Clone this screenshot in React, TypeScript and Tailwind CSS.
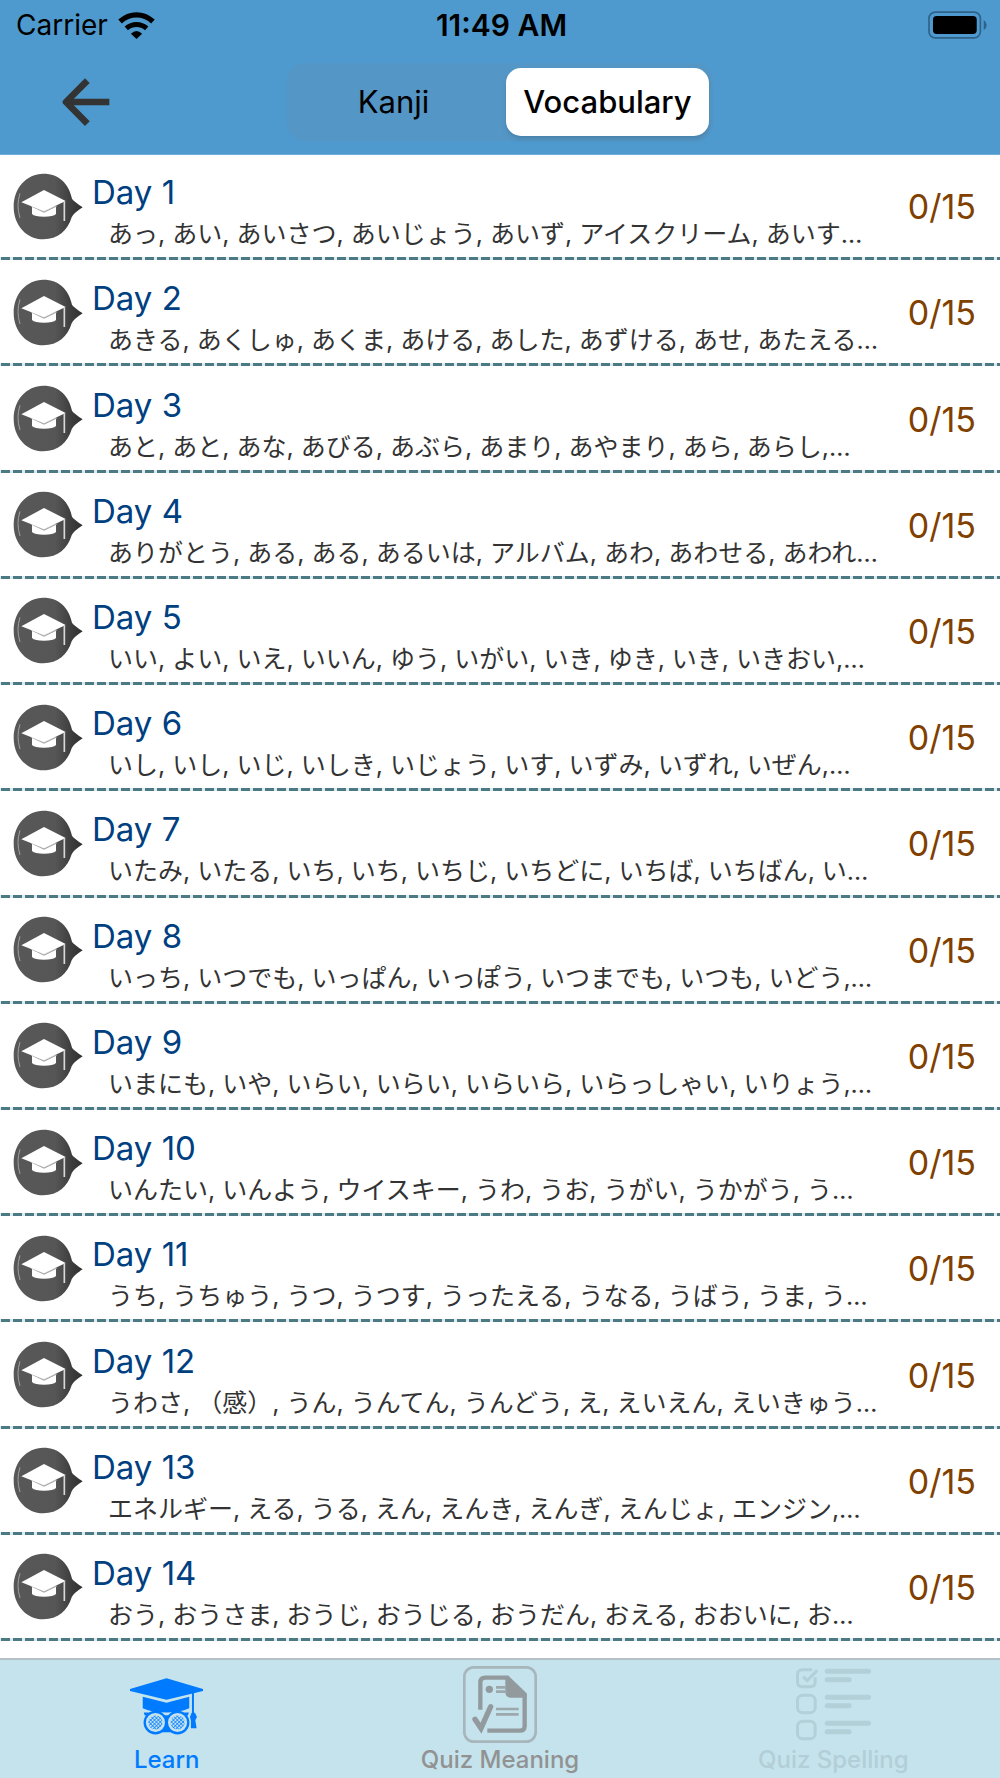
import React, { useState } from "react";

interface Lesson {
  title: string;
  words: string;
  done: number;
  total: number;
}

const lessons: Lesson[] = [
  { title: "Day 1", words: "あっ, あい, あいさつ, あいじょう, あいず, アイスクリーム, あいす…", done: 0, total: 15 },
  { title: "Day 2", words: "あきる, あくしゅ, あくま, あける, あした, あずける, あせ, あたえる…", done: 0, total: 15 },
  { title: "Day 3", words: "あと, あと, あな, あびる, あぶら, あまり, あやまり, あら, あらし,…", done: 0, total: 15 },
  { title: "Day 4", words: "ありがとう, ある, ある, あるいは, アルバム, あわ, あわせる, あわれ…", done: 0, total: 15 },
  { title: "Day 5", words: "いい, よい, いえ, いいん, ゆう, いがい, いき, ゆき, いき, いきおい,…", done: 0, total: 15 },
  { title: "Day 6", words: "いし, いし, いじ, いしき, いじょう, いす, いずみ, いずれ, いぜん,…", done: 0, total: 15 },
  { title: "Day 7", words: "いたみ, いたる, いち, いち, いちじ, いちどに, いちば, いちばん, い…", done: 0, total: 15 },
  { title: "Day 8", words: "いっち, いつでも, いっぱん, いっぽう, いつまでも, いつも, いどう,…", done: 0, total: 15 },
  { title: "Day 9", words: "いまにも, いや, いらい, いらい, いらいら, いらっしゃい, いりょう,…", done: 0, total: 15 },
  { title: "Day 10", words: "いんたい, いんよう, ウイスキー, うわ, うお, うがい, うかがう, う…", done: 0, total: 15 },
  { title: "Day 11", words: "うち, うちゅう, うつ, うつす, うったえる, うなる, うばう, うま, う…", done: 0, total: 15 },
  { title: "Day 12", words: "うわさ, （感）, うん, うんてん, うんどう, え, えいえん, えいきゅう…", done: 0, total: 15 },
  { title: "Day 13", words: "エネルギー, える, うる, えん, えんき, えんぎ, えんじょ, エンジン,…", done: 0, total: 15 },
  { title: "Day 14", words: "おう, おうさま, おうじ, おうじる, おうだん, おえる, おおいに, お…", done: 0, total: 15 },
];

const WifiIcon = () => (
  <svg className="h-[27px] w-[37px]" viewBox="360 30 112 82" fill="none" aria-hidden="true">
    <path d="M366 59C396 32 436 32 466 59" stroke="black" strokeWidth="16" />
    <path d="M385 80C403 64 429 64 447 80" stroke="black" strokeWidth="15" />
    <path d="M399 96Q416 80 433 96L416 112Z" fill="black" />
  </svg>
);

const BatteryIcon = () => (
  <svg className="h-7 w-[59px]" viewBox="1284 30 178 84" aria-hidden="true">
    <rect x="1287" y="33" width="155" height="78" rx="19" fill="none" stroke="#2f6289" strokeWidth="5" />
    <rect x="1299" y="45" width="132" height="54" rx="11" fill="black" />
    <path d="M1452 57Q1461 63 1461 72Q1461 82 1452 88Z" fill="#2f6289" />
  </svg>
);

const BackIcon = () => (
  <svg className="h-12 w-12" viewBox="186 232 144 144" fill="none" stroke="#333333" strokeWidth="20" aria-hidden="true">
    <path d="M328 304H200" />
    <path d="M262 240L198 304L262 369" strokeLinejoin="round" />
  </svg>
);

const LessonIcon = () => (
  <svg className="h-[67px] w-[70px] shrink-0" viewBox="39 67 210 201" aria-hidden="true">
    <defs>
      <linearGradient id="bubble" x1="0" x2="1" y1="0" y2="0">
        <stop offset="0" stopColor="#585858" />
        <stop offset="0.6" stopColor="#565656" />
        <stop offset="0.85" stopColor="#3c3c3c" />
        <stop offset="1" stopColor="#303030" />
      </linearGradient>
    </defs>
    <path
      d="M130 69C178 69 207 100 216 144Q220 151 248 170Q220 188 215 200C203 240 174 266 130 266C80 266 41 224 41 168C41 112 80 69 130 69Z"
      fill="url(#bubble)"
    />
    <path d="M60 128Q48 164 60 202" fill="none" stroke="#a0a0a0" strokeWidth="3" />
    <path d="M96 165L132 181L168 165V190Q160 198 132 198Q104 198 96 190Z" fill="white" />
    <path d="M94 166L132 184L170 166" fill="none" stroke="#a8a8a8" strokeWidth="4" />
    <path d="M64 155L132 118L197 151L132 182Z" fill="white" />
    <path d="M193 152V211" stroke="#d8d8d8" strokeWidth="5" />
  </svg>
);

const LearnIcon = () => (
  <svg className="h-[57px] w-[73px]" viewBox="119 80 218 170" aria-hidden="true">
    <defs>
      <pattern id="lens" width="8" height="8" patternUnits="userSpaceOnUse" patternTransform="rotate(45)">
        <path d="M0 0H8M0 0V8" stroke="#007aff" strokeWidth="4" />
      </pattern>
    </defs>
    <path d="M119 113L228 81L337 113V119L228 145L119 119Z" fill="#007aff" />
    <path d="M157 136L228 154L296 136V170Q265 183 228 183Q188 183 157 170Z" fill="#007aff" />
    <path d="M160 183Q195 181 214 195H242Q260 181 295 183L292 192H163Z" fill="#007aff" />
    <path d="M214 192H242V242H214Z" fill="#007aff" />
    <g fill="#c4e3ed" stroke="#007aff" strokeWidth="7">
      <circle cx="195" cy="213" r="32" />
      <circle cx="261" cy="213" r="32" />
    </g>
    <circle cx="195" cy="213" r="21" fill="url(#lens)" />
    <circle cx="261" cy="213" r="21" fill="url(#lens)" />
    <path d="M307 118V190" stroke="#007aff" strokeWidth="6" />
    <path d="M303 184H313L319 196L314 206L318 230H301V207L298 196Z" fill="#007aff" />
  </svg>
);

const MeaningIcon = () => (
  <svg className="h-[77px] w-[74px]" viewBox="189 51 222 231" fill="none" stroke="#929a9e" aria-hidden="true">
    <rect x="193" y="55" width="214" height="223" rx="28" stroke="#a8b6bc" strokeWidth="8" />
    <path d="M241 182V101Q241 86 256 86H322L374 136V231Q374 245 360 245H262" strokeWidth="13" />
    <path d="M316 82L380 138V146H332Q316 145 316 130Z" fill="#929a9e" stroke="none" />
    <circle cx="268" cy="121" r="11" fill="#929a9e" stroke="none" />
    <path d="M288 115H316M288 128H320M288 180H356M288 196H356" stroke="#9ca8ac" strokeWidth="8" />
    <path d="M225 211L243 238L272 173" strokeWidth="16" strokeLinecap="round" />
  </svg>
);

const SpellingIcon = () => (
  <svg className="h-[74px] w-[77px]" viewBox="160 55 230 222" fill="none" stroke="#b3d0d9" strokeWidth="9" aria-hidden="true">
    <path d="M211 63H182Q167 63 167 78V99Q167 114 182 114H205Q220 114 220 99V86" />
    <path d="M184 84L196 96L226 65" />
    <rect x="167" y="140" width="53" height="52" rx="15" />
    <rect x="167" y="218" width="53" height="52" rx="15" />
    <g strokeWidth="15" strokeLinecap="round">
      <path d="M256 68H380M256 146H380M256 224H380" />
      <path d="M256 93H322M256 171H322M256 249H322" />
    </g>
  </svg>
);

const StatusBar = () => (
  <div className="grid h-12 grid-cols-3 items-center pt-0.5 pr-[13px] pl-4 text-[28px] leading-none">
    <div className="flex items-center gap-2.5">
      <span>Carrier</span>
      <WifiIcon />
    </div>
    <span className="text-center text-[30px] font-semibold">11:49 AM</span>
    <div className="flex justify-end">
      <BatteryIcon />
    </div>
  </div>
);

const LessonRow: React.FC<{ lesson: Lesson }> = ({ lesson }) => (
  <li className="flex flex-1 flex-col pb-px">
    <button className="flex w-full flex-1 items-center text-left">
      <span className="pl-[13px]">
        <LessonIcon />
      </span>
      <span className="min-w-0 flex-1 pt-3 pl-[9px]">
        <span className="block text-[33px] leading-11 text-[#004080]">{lesson.title}</span>
        <span className="block pl-4 text-[25px] leading-10 whitespace-nowrap text-[#333333]">
          {lesson.words}
        </span>
      </span>
      <span className="shrink-0 pt-0.5 pr-6 text-[34px] leading-10 text-[#804000]">
        {lesson.done}/{lesson.total}
      </span>
    </button>
    <div className="h-[3px] bg-[repeating-linear-gradient(90deg,#dfe9ec_0px,#dfe9ec_1px,#4b7a84_1px,#4b7a84_10px,#dfe9ec_10px,#dfe9ec_12px)]" />
  </li>
);

const App: React.FC = () => {
  const [mode, setMode] = useState("Vocabulary");

  return (
    <div className="flex min-h-screen flex-col bg-white font-['Inter','Noto_Sans_CJK_JP',sans-serif] text-black">
      <header className="border-b border-[#6cadd8] bg-[#4e9ace]">
        <StatusBar />
        <div className="grid h-[106px] grid-cols-[1fr_426px_1fr] items-center pt-0.5">
          <button aria-label="Back" className="w-fit pl-[62px]">
            <BackIcon />
          </button>
          <div
            role="tablist"
            className="grid h-[78px] grid-cols-[1fr_203px] gap-1.5 rounded-[18px] bg-[#5496c5] py-[5px] pr-1"
          >
            {["Kanji", "Vocabulary"].map((name) => (
              <button
                key={name}
                role="tab"
                aria-selected={mode === name}
                onClick={() => setMode(name)}
                className={`text-[31px] ${
                  mode === name ? "rounded-[15px] bg-white font-medium shadow-md" : ""
                }`}
              >
                {name}
              </button>
            ))}
          </div>
        </div>
      </header>

      <ul className="flex flex-1 flex-col pb-4">
        {lessons.map((lesson) => (
          <LessonRow key={lesson.title} lesson={lesson} />
        ))}
      </ul>

      <nav className="flex h-[120px] border-t-2 border-[#b4c0c5] bg-[#c4e3ed] text-[24px] leading-6 font-medium">
        <button className="flex flex-1 flex-col items-center text-[#007aff]">
          <span className="flex h-[88px] items-center pt-1">
            <LearnIcon />
          </span>
          Learn
        </button>
        <button className="flex flex-1 flex-col items-center text-[#929292]">
          <span className="flex h-[88px] items-center">
            <MeaningIcon />
          </span>
          Quiz Meaning
        </button>
        <button className="flex flex-1 flex-col items-center text-[#b3ced6]">
          <span className="flex h-[88px] items-center">
            <SpellingIcon />
          </span>
          Quiz Spelling
        </button>
      </nav>
    </div>
  );
};

export default App;
